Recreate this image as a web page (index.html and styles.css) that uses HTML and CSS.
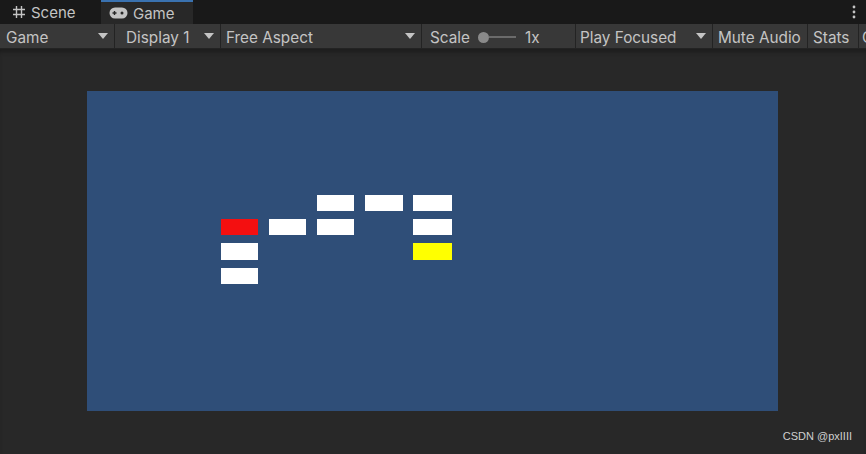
FILE: index.html
```html
<!DOCTYPE html>
<html lang="en">
<head>
    <meta charset="UTF-8">
    <title>Game</title>
    <link rel="stylesheet" href="styles.css">
</head>
<body>

<div class="tabbar">
    <div class="tab">
        <svg width="14" height="14" viewBox="0 0 14 14"><path d="M4.5 1v12M9.5 1v12M1 4.5h12M1 9.5h12" stroke="#c4c4c4" stroke-width="1.4" fill="none"/></svg>
        <span>Scene</span>
    </div>
    <div class="tab active">
        <svg width="19" height="12" viewBox="0 0 19 12"><rect x="0.5" y="0.5" width="18" height="11" rx="5.5" fill="#c4c4c4"/><path d="M3.5 6h4M5.5 4v4" stroke="#282828" stroke-width="1.4"/><circle cx="13" cy="6" r="1.5" fill="#282828"/></svg>
        <span>Game</span>
    </div>
    <div class="more">
        <svg width="4" height="14" viewBox="0 0 4 14"><circle cx="2" cy="2" r="1.4" fill="#c4c4c4"/><circle cx="2" cy="7" r="1.4" fill="#c4c4c4"/><circle cx="2" cy="12" r="1.4" fill="#c4c4c4"/></svg>
    </div>
</div>

<div class="toolbar">
    <div class="seg drop w-game">Game<i class="caret"></i></div>
    <div class="seg drop w-display">Display 1<i class="caret"></i></div>
    <div class="seg drop w-aspect">Free Aspect<i class="caret"></i></div>
    <div class="seg w-scale">Scale <span class="slider"><i class="knob"></i><i class="track"></i></span> 1x</div>
    <div class="seg drop w-play">Play Focused<i class="caret"></i></div>
    <div class="seg w-mute">Mute Audio</div>
    <div class="seg w-stats">Stats</div>
    <div class="seg w-gizmo">G</div>
</div>

<main class="view">
    <div class="screen">
        <div class="grid">
            <div class="brick r1 c3"></div>
            <div class="brick r1 c4"></div>
            <div class="brick r1 c5"></div>
            <div class="brick red r2 c1"></div>
            <div class="brick r2 c2"></div>
            <div class="brick r2 c3"></div>
            <div class="brick r2 c5"></div>
            <div class="brick r3 c1"></div>
            <div class="brick yellow r3 c5"></div>
            <div class="brick r4 c1"></div>
        </div>
    </div>
    <div class="credit">CSDN @pxIIII</div>
</main>

</body>
</html>
```

FILE: styles.css
```css
body {
    margin: 0;
    width: 866px;
    height: 454px;
    overflow: hidden;
    background: #282828;
    font-family: Inter, "Noto Sans", sans-serif;
    color: #c4c4c4;
}
.tabbar {
    display: flex;
    height: 24px;
    background: #191919;
}
.tab {
    display: flex;
    align-items: center;
    gap: 5px;
    width: 100px;
    padding-left: 12px;
    box-sizing: border-box;
    font-size: 15px;
}
.tab.active {
    width: 92px;
    margin-left: 1px;
    padding-left: 8px;
    background: #282828;
    border-top: 2px solid #3a72b0;
}
.more {
    margin-left: auto;
    width: 24px;
    display: flex;
    align-items: center;
    justify-content: center;
}
.toolbar {
    display: flex;
    height: 25px;
    background: #232323;
    border-bottom: 1px solid #1e1e1e;
    overflow: hidden;
}
.seg {
    display: flex;
    align-items: center;
    flex: none;
    box-sizing: border-box;
    height: 24px;
    margin-right: 1px;
    padding: 2px 6px 0;
    background: #383838;
    font-size: 15.3px;
    white-space: nowrap;
}
.drop {
    justify-content: space-between;
}
.caret {
    width: 0;
    height: 0;
    margin-top: -2px;
    border-left: 5px solid transparent;
    border-right: 5px solid transparent;
    border-top: 6px solid #c4c4c4;
}
.w-game { width: 114px; }
.w-display { width: 105px; padding-left: 11px; }
.w-aspect { width: 200px; padding-left: 5px; }
.w-scale { width: 153px; padding-left: 8px; }
.w-play { width: 136px; padding-left: 4px; }
.w-mute { width: 94px; padding-left: 5px; }
.w-stats { width: 50px; padding-left: 5px; }
.w-gizmo { width: 80px; padding-left: 3px; margin-right: 0; }
.slider {
    display: inline-flex;
    align-items: center;
    margin: 0 9px 0 8px;
}
.knob {
    width: 11px;
    height: 11px;
    border-radius: 50%;
    background: #8a8a8a;
}
.track {
    width: 27px;
    height: 2px;
    background: #6b6b6b;
}
.view {
    position: relative;
    height: 404px;
    background: #282828;
    box-shadow: inset 0 4px 4px -2px #1c1c1c;
    padding: 41px 0 0 87px;
    box-sizing: border-box;
}
.screen {
    width: 691px;
    height: 320px;
    background: #2f4e78;
    padding: 104px 0 0 134px;
    box-sizing: border-box;
}
.grid {
    display: grid;
    grid-template-columns: 37px 37px 37px 37px 39px;
    grid-template-rows: 16px 16px 17px 16px;
    column-gap: 11px;
    row-gap: 8px;
}
.brick {
    background: #ffffff;
}
.brick.red { background: #f40f10; }
.brick.yellow { background: #ffff00; }
.r1 { grid-row: 1; }
.r2 { grid-row: 2; }
.r3 { grid-row: 3; }
.r4 { grid-row: 4; }
.c1 { grid-column: 1; }
.c2 { grid-column: 2; }
.c3 { grid-column: 3; }
.c4 { grid-column: 4; width: 38px; }
.c5 { grid-column: 5; }
.credit {
    position: absolute;
    right: 14px;
    bottom: 12px;
    font-family: "Liberation Sans", Arial, sans-serif;
    font-size: 11px;
    color: #d0d0d0;
}
```
